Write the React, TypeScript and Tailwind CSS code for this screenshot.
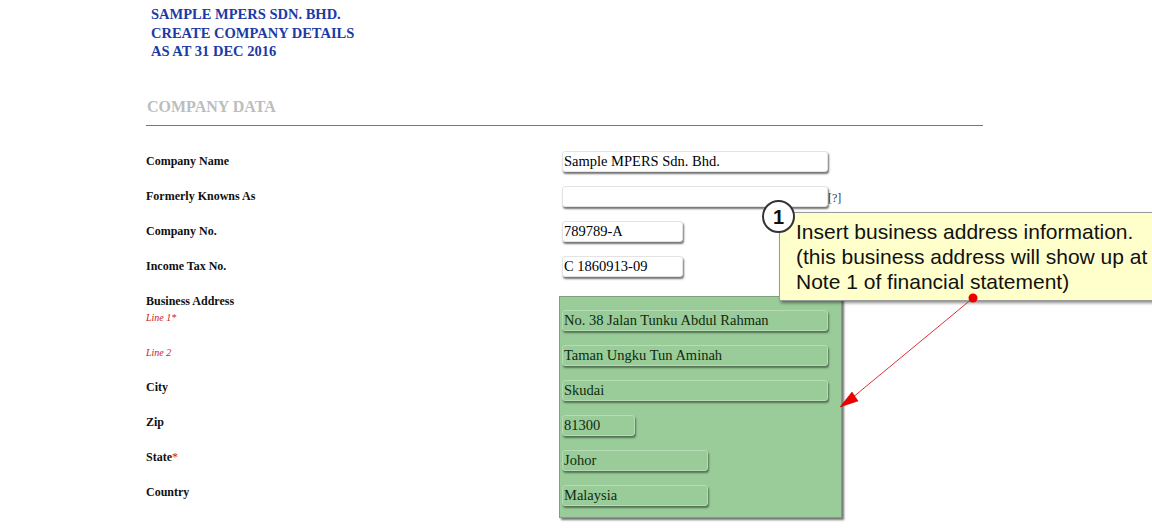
import React from 'react';

const inputCls =
  'h-[21px] rounded-[3px] border border-[#e3e3e3] bg-white px-[1px] text-[14.5px] leading-[19px] text-black shadow-[1px_2px_2px_rgba(0,0,0,0.55)] outline-none';
const greenInputCls =
  'h-[21px] rounded-[3px] border border-[#b5dcb5] bg-[#99cc99] px-[1px] text-[14.5px] leading-[19px] text-[#102a10] shadow-[1px_2px_2px_rgba(0,0,0,0.45)] outline-none';

function Row({ label, children }: { label: React.ReactNode; children: React.ReactNode }) {
  return (
    <div className="flex h-[35px] items-center">
      <div className="w-[416px] text-[12px] font-bold text-[#111]">{label}</div>
      <div className="flex items-center">{children}</div>
    </div>
  );
}

export default function App() {
  return (
    <div className="relative h-[528px] w-[1152px] overflow-hidden bg-white" style={{ fontFamily: '"Liberation Serif", "Times New Roman", serif' }}>
      {/* page heading */}
      <div className="pl-[151px] pt-[5px] text-[14.5px] font-bold leading-[18.5px] text-[#1c3aa6]">
        <div>SAMPLE MPERS SDN. BHD.</div>
        <div>CREATE COMPANY DETAILS</div>
        <div>AS AT 31 DEC 2016</div>
      </div>

      <div className="pl-[146px]">
        <div className="mt-[37.5px] w-[837px] border-b border-[#777] pb-[9px] pl-[1px] text-[16px] font-bold leading-[18px] text-[#bdbdbd]">
          COMPANY DATA
        </div>

        <div className="mt-[17.5px]">
          <Row label="Company Name">
            <input className={`${inputCls} w-[266px]`} defaultValue="Sample MPERS Sdn. Bhd." />
          </Row>
          <Row label="Formerly Knowns As">
            <input className={`${inputCls} w-[266px]`} defaultValue="" />
            <span className="mt-[4px] text-[12px] text-[#333]">[?]</span>
          </Row>
          <Row label="Company No.">
            <input className={`${inputCls} w-[121px]`} defaultValue="789789-A" />
          </Row>
          <Row label="Income Tax No.">
            <input className={`${inputCls} w-[121px]`} defaultValue="C 1860913-09" />
          </Row>
        </div>

        {/* business address */}
        <div className="flex">
          <div className="w-[413px] pt-[9.5px] text-[12px] font-bold text-[#111]">
            <div className="h-[16px] leading-[16px]">Business Address</div>
            <div className="h-[25.5px] text-[10px] font-normal italic leading-[18px] text-[#d4141c]">Line 1*</div>
            <div className="flex h-[35px] items-center text-[10px] font-normal italic text-[#d4141c]">Line 2</div>
            <div className="flex h-[35px] items-center">City</div>
            <div className="flex h-[35px] items-center">Zip</div>
            <div className="flex h-[35px] items-center">
              State<span className="font-normal text-[#d4141c]">*</span>
            </div>
            <div className="flex h-[35px] items-center">Country</div>
          </div>
          <div className="mt-[12.5px] w-[283px] border border-[#7f9f7f] bg-[#99cc99] pb-[4.5px] pl-[2px] pt-[5.5px] shadow-[2px_2px_2px_rgba(0,0,0,0.55)]">
            <div className="flex h-[35px] items-center">
              <input className={`${greenInputCls} w-[266px]`} defaultValue="No. 38 Jalan Tunku Abdul Rahman" />
            </div>
            <div className="flex h-[35px] items-center">
              <input className={`${greenInputCls} w-[266px]`} defaultValue="Taman Ungku Tun Aminah" />
            </div>
            <div className="flex h-[35px] items-center">
              <input className={`${greenInputCls} w-[266px]`} defaultValue="Skudai" />
            </div>
            <div className="flex h-[35px] items-center">
              <input className={`${greenInputCls} w-[73px]`} defaultValue="81300" />
            </div>
            <div className="flex h-[35px] items-center">
              <input className={`${greenInputCls} w-[146px]`} defaultValue="Johor" />
            </div>
            <div className="flex h-[35px] items-center">
              <input className={`${greenInputCls} w-[146px]`} defaultValue="Malaysia" />
            </div>
          </div>
        </div>
      </div>

      {/* annotation callout */}
      <div
        className="absolute left-[779px] top-[212px] h-[89px] w-[400px] border border-[#9a9a9a] bg-[#ffffcc] pl-[16px] pt-[6px] text-[21px] leading-[25px] text-[#111] shadow-[2px_2px_3px_rgba(0,0,0,0.45)]"
        style={{ fontFamily: '"Liberation Sans", Arial, sans-serif' }}
      >
        <div className="whitespace-nowrap">Insert business address information.</div>
        <div className="whitespace-nowrap">(this business address will show up at</div>
        <div className="whitespace-nowrap">Note 1 of financial statement)</div>
      </div>
      <div
        className="absolute left-[762px] top-[200px] flex h-[33px] w-[33px] items-center justify-center rounded-full border-2 border-[#333] bg-white text-[20px] font-bold text-[#111]"
        style={{ fontFamily: '"Liberation Sans", Arial, sans-serif' }}
      >
        1
      </div>

      <svg className="pointer-events-none absolute left-0 top-0" width="1152" height="528">
        <line x1="973" y1="298" x2="852" y2="398" stroke="#e0303a" strokeWidth="1" />
        <circle cx="973" cy="298" r="4.5" fill="#ee0000" />
        <polygon points="840,407 852,392 858,401" fill="#ee0000" stroke="#b00000" strokeWidth="0.5" />
      </svg>
    </div>
  );
}
